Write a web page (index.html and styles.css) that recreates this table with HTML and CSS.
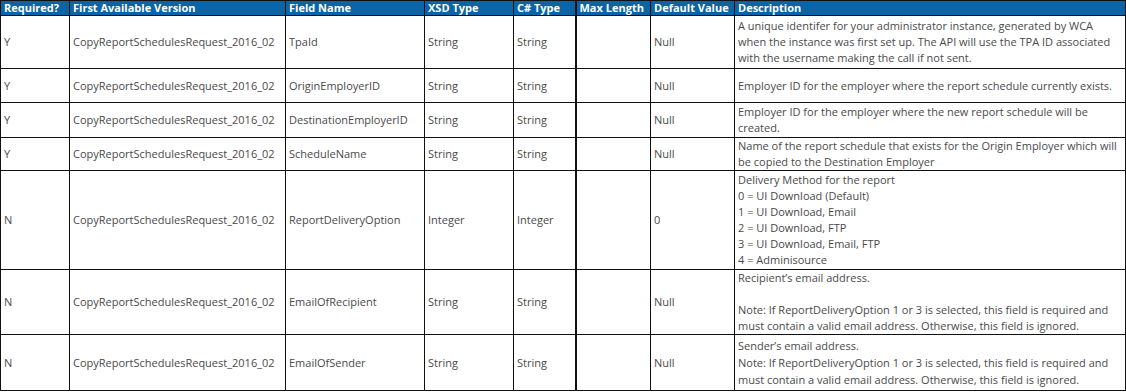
FILE: index.html
```html
<!DOCTYPE html>
<html>
<head>
<meta charset="utf-8">
<link rel="stylesheet" href="styles.css">
</head>
<body>
<table class="spec">
  <colgroup>
    <col class="c-req"><col class="c-ver"><col class="c-name"><col class="c-xsd"><col class="c-cs"><col class="c-max"><col class="c-def"><col class="c-desc">
  </colgroup>
  <thead>
    <tr class="head">
      <th>Required?</th><th>First Available Version</th><th>Field Name</th><th>XSD Type</th><th>C# Type</th><th class="thick">Max Length</th><th>Default Value</th><th>Description</th>
    </tr>
  </thead>
  <tbody>
    <tr class="r1">
      <td>Y</td><td>CopyReportSchedulesRequest_2016_02</td><td>TpaId</td><td>String</td><td>String</td><td class="thick"></td><td>Null</td>
      <td>A unique identifer for your administrator instance, generated by WCA when the instance was first set up. The API will use the TPA ID associated with the username making the call if not sent.</td>
    </tr>
    <tr class="r2">
      <td>Y</td><td>CopyReportSchedulesRequest_2016_02</td><td>OriginEmployerID</td><td>String</td><td>String</td><td class="thick"></td><td>Null</td>
      <td>Employer ID for the employer where the report schedule currently exists.</td>
    </tr>
    <tr class="r3">
      <td>Y</td><td>CopyReportSchedulesRequest_2016_02</td><td>DestinationEmployerID</td><td>String</td><td>String</td><td class="thick"></td><td>Null</td>
      <td>Employer ID for the employer where the new report schedule will be created.</td>
    </tr>
    <tr class="r4">
      <td>Y</td><td>CopyReportSchedulesRequest_2016_02</td><td>ScheduleName</td><td>String</td><td>String</td><td class="thick"></td><td>Null</td>
      <td>Name of the report schedule that exists for the Origin Employer which will be copied to the Destination Employer</td>
    </tr>
    <tr class="r5">
      <td>N</td><td>CopyReportSchedulesRequest_2016_02</td><td>ReportDeliveryOption</td><td>Integer</td><td>Integer</td><td class="thick"></td><td>0</td>
      <td>Delivery Method for the report<br>0 = UI Download (Default)<br>1 = UI Download, Email<br>2 = UI Download, FTP<br>3 = UI Download, Email, FTP<br>4 = Adminisource</td>
    </tr>
    <tr class="r6">
      <td>N</td><td>CopyReportSchedulesRequest_2016_02</td><td>EmailOfRecipient</td><td>String</td><td>String</td><td class="thick"></td><td>Null</td>
      <td>Recipient’s email address.<br><br>Note: If ReportDeliveryOption 1 or 3 is selected, this field is required and must contain a valid email address. Otherwise, this field is ignored.</td>
    </tr>
    <tr class="r7">
      <td>N</td><td>CopyReportSchedulesRequest_2016_02</td><td>EmailOfSender</td><td>String</td><td>String</td><td class="thick"></td><td>Null</td>
      <td class="loose">Sender’s email address.<br>Note: If ReportDeliveryOption 1 or 3 is selected, this field is required and must contain a valid email address. Otherwise, this field is ignored.</td>
    </tr>
  </tbody>
</table>
</body>
</html>
```

FILE: styles.css
```css
html, body {
  margin: 0;
  padding: 0;
  background: #ffffff;
}

.spec {
  border-collapse: collapse;
  table-layout: fixed;
  width: 1125px;
  font-family: "Open Sans", "Liberation Sans", sans-serif;
  font-size: 11px;
  line-height: 16px;
  color: #4a4a4a;
}

.c-req { width: 69px; }
.c-ver { width: 216px; }
.c-name { width: 139px; }
.c-xsd { width: 89px; }
.c-cs { width: 62px; }
.c-max { width: 75px; }
.c-def { width: 84px; }
.c-desc { width: 391px; }

.spec th,
.spec td {
  border: 1px solid #111111;
  padding: 0 3px;
  text-align: left;
  vertical-align: middle;
  overflow: hidden;
}

.spec th {
  background: #0b64a6;
  color: #ffffff;
  font-weight: 700;
  height: 14px;
  line-height: 14px;
  white-space: nowrap;
}

.spec .thick {
  border-left-width: 2px;
}

.r1 td { height: 52px; }
.r2 td { height: 33px; }
.r3 td { height: 34px; }
.r4 td { height: 32px; }
.r5 td { height: 98px; }
.r6 td { height: 63px; }
.r7 td { height: 55px; }

.spec td.loose {
  line-height: 17px;
}
```
